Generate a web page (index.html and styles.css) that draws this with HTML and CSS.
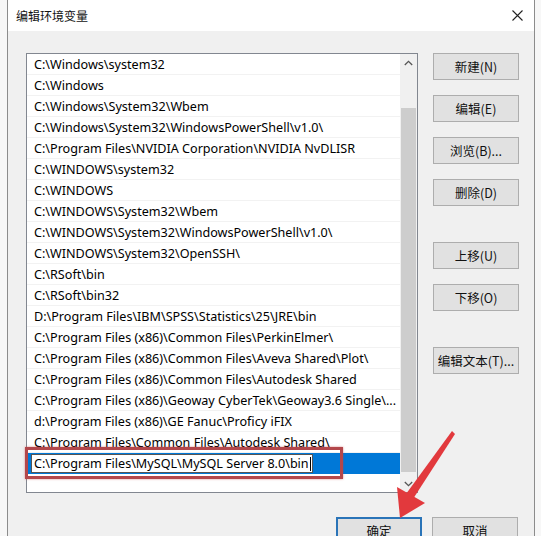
FILE: index.html
```html
<!DOCTYPE html>
<html lang="zh-CN">
<head>
<meta charset="utf-8">
<title>编辑环境变量</title>
<link rel="stylesheet" href="styles.css">
</head>
<body>
<div class="window">
  <div class="titlebar">
    <span class="title">编辑环境变量</span>
    <svg class="close" width="11" height="11" viewBox="0 0 11 11"><path d="M0.5 0.5 L10.5 10.5 M10.5 0.5 L0.5 10.5" stroke="#222" stroke-width="1.1" fill="none"/></svg>
  </div>
  <div class="content">
    <div class="main">
      <div class="listbox">
        <div class="rows">
          <div class="row">C:\Windows\system32</div>
          <div class="row">C:\Windows</div>
          <div class="row">C:\Windows\System32\Wbem</div>
          <div class="row">C:\Windows\System32\WindowsPowerShell\v1.0\</div>
          <div class="row">C:\Program Files\NVIDIA Corporation\NVIDIA NvDLISR</div>
          <div class="row">C:\WINDOWS\system32</div>
          <div class="row">C:\WINDOWS</div>
          <div class="row">C:\WINDOWS\System32\Wbem</div>
          <div class="row">C:\WINDOWS\System32\WindowsPowerShell\v1.0\</div>
          <div class="row">C:\WINDOWS\System32\OpenSSH\</div>
          <div class="row">C:\RSoft\bin</div>
          <div class="row">C:\RSoft\bin32</div>
          <div class="row">D:\Program Files\IBM\SPSS\Statistics\25\JRE\bin</div>
          <div class="row">C:\Program Files (x86)\Common Files\PerkinElmer\</div>
          <div class="row">C:\Program Files (x86)\Common Files\Aveva Shared\Plot\</div>
          <div class="row">C:\Program Files (x86)\Common Files\Autodesk Shared</div>
          <div class="row">C:\Program Files (x86)\Geoway CyberTek\Geoway3.6 Single\...</div>
          <div class="row">d:\Program Files (x86)\GE Fanuc\Proficy iFIX</div>
          <div class="row">C:\Program Files\Common Files\Autodesk Shared\</div>
          <div class="row selected"><span class="edit">C:\Program Files\MySQL\MySQL Server 8.0\bin<span class="caret"></span></span></div>
        </div>
        <div class="scrollbar">
          <div class="arrow up"><svg width="9" height="6" viewBox="0 0 9 6"><path d="M0.8 5 L4.5 1.3 L8.2 5" stroke="#555" stroke-width="1.3" fill="none"/></svg></div>
          <div class="track"><div class="thumb"></div></div>
          <div class="arrow down"><svg width="9" height="6" viewBox="0 0 9 6"><path d="M0.8 1 L4.5 4.7 L8.2 1" stroke="#555" stroke-width="1.3" fill="none"/></svg></div>
        </div>
        <div class="highlight"></div>
      </div>
      <div class="buttons">
        <button class="btn">新建(N)</button>
        <button class="btn">编辑(E)</button>
        <button class="btn">浏览(B)...</button>
        <button class="btn">删除(D)</button>
        <button class="btn gap">上移(U)</button>
        <button class="btn">下移(O)</button>
        <button class="btn gap">编辑文本(T)...</button>
      </div>
    </div>
    <div class="footer">
      <button class="btn default">确定</button>
      <button class="btn">取消</button>
    </div>
  </div>
</div>
<svg class="pointer" width="541" height="536" viewBox="0 0 541 536">
  <polygon points="452,431 455,434 413,499 406,494" fill="#e2393d"/>
  <polygon points="400,518 397,487 425,503" fill="#e2393d"/>
</svg>
</body>
</html>
```

FILE: styles.css
```css
html, body {
  margin: 0;
  padding: 0;
}
body {
  background: #f7f7f7;
  width: 541px;
  height: 536px;
  overflow: hidden;
  position: relative;
  font-family: "Noto Sans", "Noto Sans CJK SC", sans-serif;
  font-size: 12.6px;
  color: #000;
}
.window {
  margin-left: 7px;
  width: 526px;
  height: 536px;
  border-left: 1px solid #8c8c8c;
  border-right: 1px solid #8c8c8c;
  display: flex;
  flex-direction: column;
}
.titlebar {
  height: 31px;
  background: #fff;
  display: flex;
  align-items: center;
  justify-content: space-between;
  padding: 0 11px 0 8px;
  flex-shrink: 0;
}
.title {
  font-family: "Noto Sans CJK SC", sans-serif;
  font-size: 12px;
  color: #111;
  margin-top: -1px;
}
.close {
  display: block;
}
.content {
  flex: 1;
  background: #f0f0f0;
  padding: 22px 0 0 18px;
}
.main {
  display: flex;
  gap: 15px;
}
.listbox {
  position: relative;
  width: 390px;
  height: 438px;
  border: 1px solid #828790;
  background: #fff;
  display: flex;
}
.rows {
  width: 373px;
}
.row {
  height: 20px;
  border-bottom: 1px solid #f2f2f2;
  line-height: 21px;
  padding-left: 7px;
  white-space: nowrap;
  overflow: hidden;
}
.row.selected {
  background: #0078d7;
  border-bottom-color: #0078d7;
  padding-left: 4px;
  display: flex;
  align-items: center;
}
.edit {
  display: inline-block;
  background: #fff;
  border: 1px solid #555;
  height: 19px;
  line-height: 18px;
  padding: 0 1px 0 2px;
  box-sizing: border-box;
  position: relative;
}
.caret {
  display: inline-block;
  width: 1px;
  height: 14px;
  margin-left: 1px;
  background: #000;
  vertical-align: -3px;
}
.scrollbar {
  width: 17px;
  background: #f0f0f0;
  display: flex;
  flex-direction: column;
}
.arrow {
  height: 17px;
  display: flex;
  align-items: center;
  justify-content: center;
  background: #f0f0f0;
}
.track {
  flex: 1;
  padding-top: 37px;
  padding-bottom: 3px;
  display: flex;
}
.thumb {
  flex: 1;
  margin: 0 1px;
  background: #cdcdcd;
}
.highlight {
  position: absolute;
  left: -2px;
  top: 393px;
  width: 312px;
  height: 26px;
  border: 3px solid #b3474b;
  box-shadow: 0 0 2px rgba(200, 60, 60, 0.6);
}
.buttons {
  display: flex;
  flex-direction: column;
  gap: 15px;
}
.btn {
  width: 86px;
  height: 27px;
  border: 1px solid #adadad;
  background: #e1e1e1;
  font-family: "Noto Sans CJK SC", sans-serif;
  font-size: 12.5px;
  color: #111;
  padding: 0;
  margin: 0;
}
.btn.gap {
  margin-top: 21px;
}
.footer {
  display: flex;
  justify-content: flex-end;
  gap: 10px;
  padding-right: 16px;
  margin-top: 24px;
}
.btn.default {
  border: 2px solid #2a74b8;
}
.pointer {
  position: absolute;
  left: 0;
  top: 0;
  pointer-events: none;
}
```
